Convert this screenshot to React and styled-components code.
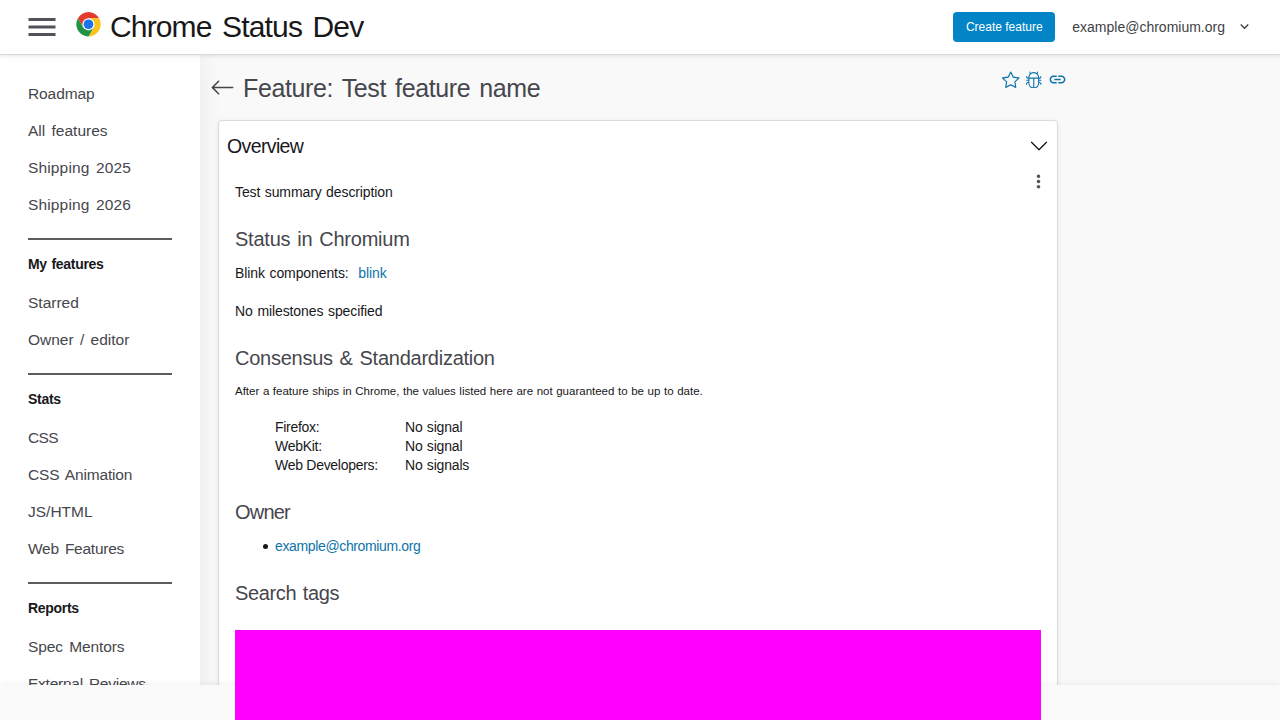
import React from 'react';
import styled, { createGlobalStyle } from 'styled-components';
import { MdMenu, MdLink, MdMoreVert, MdExpandMore } from 'react-icons/md';
import { BsArrowLeft, BsStar, BsBug, BsChevronDown } from 'react-icons/bs';

const GlobalStyle = createGlobalStyle`
  * { box-sizing: border-box; }
  html, body { margin: 0; height: 100%; overflow: hidden; }
  body {
    font-family: "Liberation Sans", Arial, sans-serif;
    font-size: 14px;
    color: #18181b;
    background: #f9f9f9;
  }
  svg { display: block; flex: none; }
  a { color: #0d74a8; text-decoration: none; }
`;

const Page = styled.div`
  height: 720px;
  display: flex;
  flex-direction: column;
  overflow: hidden;
`;

const Header = styled.header`
  position: relative;
  z-index: 2;
  flex: none;
  height: 55px;
  display: flex;
  align-items: center;
  padding: 0 27.5px 1px 24px;
  background: #fff;
  border-bottom: 1px solid #d8d8da;
  box-shadow: 0 1px 4px rgba(0, 0, 0, 0.1);
`;

const MenuButton = styled.div`
  color: #52525b;
  margin-right: 16px;
`;

const Logo = styled.svg`
  margin: 0 9px 4px 0;
`;

const SiteName = styled.h1`
  flex: 1;
  margin: 0;
  font-size: 30px;
  font-weight: 400;
  line-height: 40px;
  letter-spacing: -0.85px;
  word-spacing: 3px;
`;

const CreateButton = styled.div`
  width: 102px;
  height: 30px;
  line-height: 30px;
  border-radius: 4px;
  background: #0284c7;
  color: #fff;
  font-size: 12px;
  text-align: center;
  margin-right: 17px;
`;

const Account = styled.div`
  display: flex;
  align-items: center;
  color: #3f3f46;
  gap: 10.5px;
  line-height: 20px;
`;

const Body = styled.div`
  flex: 1;
  min-height: 0;
  display: flex;
`;

const Sidebar = styled.nav`
  position: relative;
  flex: none;
  width: 200px;
  padding: 20px 28px 0;
  background: #fff;
  box-shadow: 0 0 24px rgba(0, 0, 0, 0.07);
`;

const NavItem = styled.div`
  height: 37px;
  line-height: 37px;
  font-size: 15.5px;
  color: #46464d;
  white-space: nowrap;
  letter-spacing: ${(p) => p.$ls || 0}px;
  word-spacing: 2px;
`;

const NavGroup = styled.section`
  margin-top: 15px;
  border-top: 2px solid #5b5b60;
  padding-top: 11px;

  & > h3 {
    margin: 0 0 6px;
    font-size: 14px;
    line-height: 27px;
    font-weight: 700;
    letter-spacing: -0.3px;
    word-spacing: 1px;
  }
`;

const Main = styled.main`
  width: 880px;
  padding: 0 22px 0 10px;
`;

const TitleRow = styled.div`
  height: 65px;
  display: flex;
  align-items: center;
  color: #46464d;
`;

const PageTitle = styled.h2`
  flex: 1;
  margin: 0 0 0 8px;
  font-size: 25px;
  line-height: 32px;
  font-weight: 400;
  letter-spacing: -0.38px;
  word-spacing: 2.5px;
`;

const Actions = styled.div`
  display: flex;
  align-items: center;
  align-self: flex-start;
  margin: 15px -8.5px 0 0;
  gap: 5.2px;
  color: #0d74a8;
`;

const Card = styled.section`
  margin-left: 8px;
  width: 840px;
  height: 700px;
  border: 1px solid #dcdcde;
  border-radius: 4px;
  background: #fff;
  box-shadow: 0 1px 5px rgba(0, 0, 0, 0.08);
`;

const Summary = styled.div`
  height: 50px;
  display: flex;
  align-items: center;
  justify-content: space-between;
  padding: 0 8px;
  font-size: 19.5px;
  letter-spacing: -0.62px;
`;

const Content = styled.div`
  padding: 0 16px;
`;

const Description = styled.div`
  display: flex;
  align-items: flex-start;
  justify-content: space-between;
  height: 51px;

  & > p {
    margin: 12px 0 0;
    line-height: 19px;
    letter-spacing: -0.1px;
    word-spacing: 0.7px;
  }
  & > svg { margin: 0 -8px 0 0; color: #52525b; }
`;

const SectionTitle = styled.h3`
  margin: ${(p) => p.$top || 0}px 0 0;
  height: 34px;
  line-height: 34px;
  font-size: 20px;
  font-weight: 400;
  color: #46464d;
  letter-spacing: ${(p) => p.$ls || 0}px;
  word-spacing: 1.5px;
`;

const Line = styled.p`
  margin: ${(p) => p.$top || 0}px 0 0;
  line-height: 19px;
  letter-spacing: -0.1px;
  word-spacing: 0.9px;

  & > a { margin-left: 5px; }
`;

const Note = styled.p`
  margin: 7px 0 17px;
  font-size: 11.5px;
  line-height: 19px;
  word-spacing: 0.4px;
`;

const Signals = styled.dl`
  margin: 0 40px;
  display: grid;
  grid-template-columns: 130px auto;
  grid-auto-rows: 19px;
  line-height: 19px;

  & > dt, & > dd { margin: 0; }
  & > dt { letter-spacing: -0.28px; }
  & > dd { letter-spacing: -0.18px; word-spacing: 0.6px; }
`;

const Owners = styled.ul`
  margin: 8px 0 0;
  padding-left: 28px;
  line-height: 19px;
  list-style: none;
  letter-spacing: -0.36px;

  & > li {
    display: flex;
    align-items: center;
    gap: 7px;
  }
  & > li::before {
    content: "";
    width: 5px;
    height: 5px;
    border-radius: 50%;
    background: #18181b;
  }
`;

const Placeholder = styled.div`
  position: relative;
  z-index: 4;
  height: 120px;
  margin-top: 20px;
  background: #f0f;
`;

const Footer = styled.footer`
  position: fixed;
  inset: auto 0 0 0;
  z-index: 3;
  height: 35px;
  background: #fafafa;
  box-shadow: 0 -2px 5px rgba(0, 0, 0, 0.05);
`;

const topItems = [
  ['Roadmap', -0.1],
  ['All features', 0],
  ['Shipping 2025', 0.15],
  ['Shipping 2026', 0.15],
];

const navGroups = [
  { title: 'My features', items: [['Starred', 0], ['Owner / editor', 0]] },
  {
    title: 'Stats',
    items: [['CSS', -0.6], ['CSS Animation', -0.15], ['JS/HTML', 0], ['Web Features', -0.25]],
  },
  { title: 'Reports', items: [['Spec Mentors', -0.1], ['External Reviews', -0.25]] },
];

const NavList = ({ items }) =>
  items.map(([label, spacing]) => (
    <NavItem key={label} $ls={spacing}>{label}</NavItem>
  ));

const ChromeLogo = () => (
  <Logo width="25" height="24.5" viewBox="0 0 48 48">
    <circle cx="24" cy="24" r="24" fill="#fff" />
    <path d="M24 12h20.78A24 24 0 0 0 3.22 12L13.61 30 24 12z" fill="#e33b2e" />
    <path d="M34.39 30 24 48A24 24 0 0 0 44.78 12H24z" fill="#fcc31e" />
    <path d="M13.61 30 3.22 12A24 24 0 0 0 24 48l10.39-18z" fill="#229342" />
    <circle cx="24" cy="24" r="12" fill="#fff" />
    <circle cx="24" cy="24" r="9.5" fill="#1a73e8" />
  </Logo>
);

export default function App() {
  return (
    <>
      <GlobalStyle />
      <Page>
        <Header>
          <MenuButton><MdMenu size={36} /></MenuButton>
          <ChromeLogo />
          <SiteName>Chrome Status Dev</SiteName>
          <CreateButton>Create feature</CreateButton>
          <Account>
            example@chromium.org
            <MdExpandMore size={17} />
          </Account>
        </Header>
        <Body>
          <Sidebar>
            <NavList items={topItems} />
            {navGroups.map((g) => (
              <NavGroup key={g.title}>
                <h3>{g.title}</h3>
                <NavList items={g.items} />
              </NavGroup>
            ))}
          </Sidebar>
          <Main>
            <TitleRow>
              <BsArrowLeft size={25} />
              <PageTitle>Feature: Test feature name</PageTitle>
              <Actions>
                <BsStar size={17.5} />
                <BsBug size={17.5} />
                <MdLink size={19} />
              </Actions>
            </TitleRow>
            <Card>
              <Summary>
                Overview
                <BsChevronDown size={20} />
              </Summary>
              <Content>
                <Description>
                  <p>Test summary description</p>
                  <MdMoreVert size={21} />
                </Description>
                <SectionTitle $ls={-0.22}>Status in Chromium</SectionTitle>
                <Line $top={8}>Blink components: <a>blink</a></Line>
                <Line $top={19}>No milestones specified</Line>
                <SectionTitle $top={20} $ls={-0.25}>Consensus &amp; Standardization</SectionTitle>
                <Note>After a feature ships in Chrome, the values listed here are not guaranteed to be up to date.</Note>
                <Signals>
                  <dt>Firefox:</dt><dd>No signal</dd>
                  <dt>WebKit:</dt><dd>No signal</dd>
                  <dt>Web Developers:</dt><dd>No signals</dd>
                </Signals>
                <SectionTitle $top={20} $ls={-0.8}>Owner</SectionTitle>
                <Owners><li><a>example@chromium.org</a></li></Owners>
                <SectionTitle $top={20} $ls={-0.37}>Search tags</SectionTitle>
                <Placeholder />
              </Content>
            </Card>
          </Main>
        </Body>
        <Footer />
      </Page>
    </>
  );
}
